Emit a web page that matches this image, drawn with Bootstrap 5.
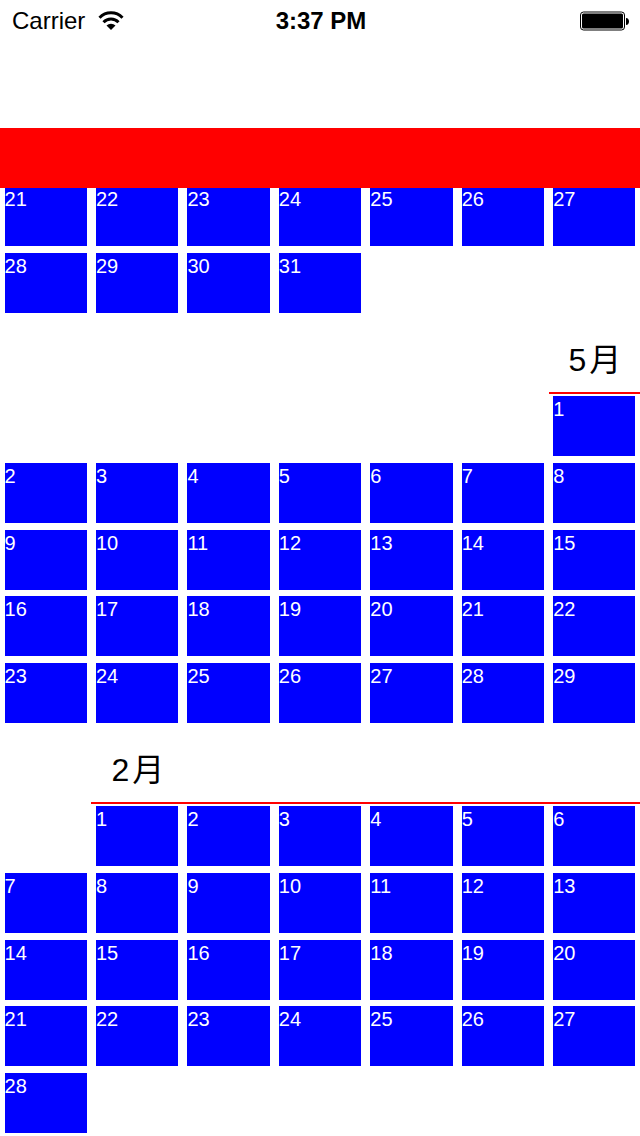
<!DOCTYPE html>
<html lang="ja">
<head>
<meta charset="utf-8">
<meta name="viewport" content="width=device-width, initial-scale=1">
<title>Calendar</title>
<link rel="stylesheet" href="https://cdn.jsdelivr.net/npm/bootstrap@5.3.0/dist/css/bootstrap.min.css">
<style>
  body { font-family: "Liberation Sans", "Noto Sans CJK JP", sans-serif; color: #000; background: #fff; }
  .status-bar { height: 42px; margin-bottom: 86px; padding: 0 10px 0 12px; font-size: 24px; line-height: 42px; }
  .carrier { gap: 11px; }
  .red-band { height: 60px; background: #f00; z-index: 1; }
  .week-grid { display: grid; grid-template-columns: repeat(7, minmax(0, 1fr)); }
  .days { grid-auto-rows: 60px; row-gap: 7px; }
  .days-tail { margin-top: -2px; }
  .days-five { row-gap: 0; align-content: space-between; min-height: 327px; }
  .days li { margin: 0 5%; padding-top: 1px; background: #00f; color: #fff; font-size: 20px; line-height: 24px; }
  .month-title { display: flex; gap: 3px; height: 81px; margin: 0 0 2px; padding: 23px 0 0 20px; border-bottom: 2px solid #f00; font-size: 32px; line-height: 48px; font-weight: 400; }
  .from-2 { grid-column: 2 / -1; }
  .from-7 { grid-column: 7 / -1; }
  .days .start-2 { grid-column-start: 2; }
  .days .start-7 { grid-column-start: 7; }
</style>
</head>
<body>
<header>
  <div class="status-bar row g-0 align-items-center">
    <div class="carrier col d-flex align-items-center">
      <span>Carrier</span>
      <svg width="30" height="24" viewBox="0 0 30 24" aria-label="Wi-Fi" role="img">
        <g fill="none" stroke="#000" stroke-width="3">
          <path d="M3.500 8.700a16 16 0 0 1 23 0"/>
          <path d="M7.500 13.200a10.500 10.500 0 0 1 15 0"/>
        </g>
        <path d="M10.500 16.500a6.500 6.500 0 0 1 9 0L15 21z"/>
      </svg>
    </div>
    <div class="col-auto fw-bold">3:37 PM</div>
    <div class="col d-flex justify-content-end">
      <svg width="50" height="20" viewBox="0 0 50 20" aria-label="Battery full" role="img">
        <rect x=".5" y="1" width="44" height="18" rx="3" fill="#fff" stroke="#000"/>
        <rect x="2" y="2.500" width="41" height="15" rx="1.500"/>
        <path d="M46 7c4 0 4 7 0 7z"/>
      </svg>
    </div>
  </div>
  <div class="red-band position-relative"></div>
</header>
<main>
  <section>
    <ol class="days days-tail week-grid list-unstyled mb-0">
      <li>21</li><li>22</li><li>23</li><li>24</li><li>25</li><li>26</li><li>27</li>
      <li>28</li><li>29</li><li>30</li><li>31</li>
    </ol>
  </section>
  <section>
    <div class="week-grid"><h2 class="month-title from-7"><span>5</span><span>月</span></h2></div>
    <ol class="days days-five week-grid list-unstyled mb-0">
      <li class="start-7">1</li>
      <li>2</li><li>3</li><li>4</li><li>5</li><li>6</li><li>7</li><li>8</li>
      <li>9</li><li>10</li><li>11</li><li>12</li><li>13</li><li>14</li><li>15</li>
      <li>16</li><li>17</li><li>18</li><li>19</li><li>20</li><li>21</li><li>22</li>
      <li>23</li><li>24</li><li>25</li><li>26</li><li>27</li><li>28</li><li>29</li>
    </ol>
  </section>
  <section>
    <div class="week-grid"><h2 class="month-title from-2"><span>2</span><span>月</span></h2></div>
    <ol class="days days-five week-grid list-unstyled mb-0">
      <li class="start-2">1</li><li>2</li><li>3</li><li>4</li><li>5</li><li>6</li>
      <li>7</li><li>8</li><li>9</li><li>10</li><li>11</li><li>12</li><li>13</li>
      <li>14</li><li>15</li><li>16</li><li>17</li><li>18</li><li>19</li><li>20</li>
      <li>21</li><li>22</li><li>23</li><li>24</li><li>25</li><li>26</li><li>27</li>
      <li>28</li>
    </ol>
  </section>
</main>
<script src="https://cdn.jsdelivr.net/npm/bootstrap@5.3.0/dist/js/bootstrap.bundle.min.js"></script>
</body>
</html>
